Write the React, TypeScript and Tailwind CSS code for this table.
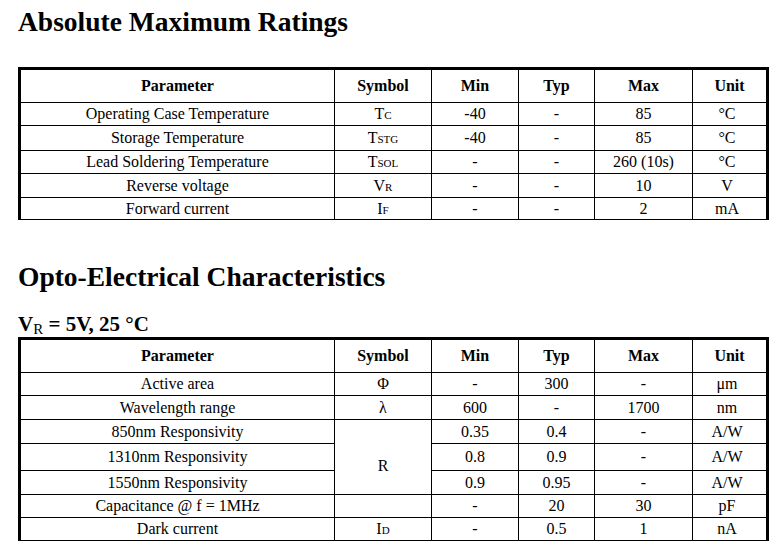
type Cell = React.ReactNode

type Row = {
  h: string
  param: string
  symbol?: Cell
  symbolSpan?: number
  noSymbol?: boolean
  min: string
  typ: string
  max: string
  unit: string
}

const Sym = ({ base, sub }: { base: string; sub: string }) => (
  <span>
    {base}
    <span className="text-[11px]">{sub}</span>
  </span>
)

const ratings: Row[] = [
  { h: 'h-[23px]', param: 'Operating Case Temperature', symbol: <Sym base="T" sub="C" />, min: '-40', typ: '-', max: '85', unit: '°C' },
  { h: 'h-[25px]', param: 'Storage Temperature', symbol: <Sym base="T" sub="STG" />, min: '-40', typ: '-', max: '85', unit: '°C' },
  { h: 'h-[23px]', param: 'Lead Soldering Temperature', symbol: <Sym base="T" sub="SOL" />, min: '-', typ: '-', max: '260 (10s)', unit: '°C' },
  { h: 'h-[24px]', param: 'Reverse voltage', symbol: <Sym base="V" sub="R" />, min: '-', typ: '-', max: '10', unit: 'V' },
  { h: 'h-[22px]', param: 'Forward current', symbol: <Sym base="I" sub="F" />, min: '-', typ: '-', max: '2', unit: 'mA' },
]

const opto: Row[] = [
  { h: 'h-[23px]', param: 'Active area', symbol: 'Φ', min: '-', typ: '300', max: '-', unit: 'μm' },
  { h: 'h-[24px]', param: 'Wavelength range', symbol: 'λ', min: '600', typ: '-', max: '1700', unit: 'nm' },
  { h: 'h-[24px]', param: '850nm Responsivity', symbol: 'R', symbolSpan: 3, min: '0.35', typ: '0.4', max: '-', unit: 'A/W' },
  { h: 'h-[27px]', param: '1310nm Responsivity', noSymbol: true, min: '0.8', typ: '0.9', max: '-', unit: 'A/W' },
  { h: 'h-[24px]', param: '1550nm Responsivity', noSymbol: true, min: '0.9', typ: '0.95', max: '-', unit: 'A/W' },
  { h: 'h-[23px]', param: 'Capacitance @ f = 1MHz', symbol: '', min: '-', typ: '20', max: '30', unit: 'pF' },
  { h: 'h-[23px]', param: 'Dark current', symbol: <Sym base="I" sub="D" />, min: '-', typ: '0.5', max: '1', unit: 'nA' },
]

const td = 'border-b border-r border-black p-0 text-center align-middle'

function SpecTable({ rows }: { rows: Row[] }) {
  return (
    <table className="w-[751px] table-fixed border-separate border-spacing-0 border-x-[3px] border-t-[3px] border-black text-[16px] leading-none">
      <thead>
        <tr className="font-bold">
          <th className={`${td} h-[33px] w-[314px]`}>Parameter</th>
          <th className={`${td} w-[97px]`}>Symbol</th>
          <th className={`${td} w-[87px]`}>Min</th>
          <th className={`${td} w-[76px]`}>Typ</th>
          <th className={`${td} w-[98px]`}>Max</th>
          <th className="border-b border-black p-0 text-center">Unit</th>
        </tr>
      </thead>
      <tbody>
        {rows.map((r) => (
          <tr key={r.param}>
            <td className={`${td} ${r.h}`}>{r.param}</td>
            {!r.noSymbol && (
              <td className={`${td} ${r.symbolSpan ? 'pt-[18px]' : ''}`} rowSpan={r.symbolSpan}>
                {r.symbol}
              </td>
            )}
            <td className={td}>{r.min}</td>
            <td className={td}>{r.typ}</td>
            <td className={td}>{r.max}</td>
            <td className="border-b border-black p-0 pr-[5px] text-center align-middle">{r.unit}</td>
          </tr>
        ))}
      </tbody>
    </table>
  )
}

export default function App() {
  return (
    <div className="min-h-screen bg-white pl-[18px] pt-[8px] text-black [font-family:'Liberation_Serif','Times_New_Roman',serif]">
      <h1 className="text-[27.5px] font-bold leading-[27px]">Absolute Maximum Ratings</h1>
      <div className="mt-[32px]">
        <SpecTable rows={ratings} />
      </div>

      <h1 className="mt-[43px] text-[27.5px] font-bold leading-[27px]">Opto-Electrical Characteristics</h1>
      <p className="mt-[24px] h-[21px] text-[21px] font-bold leading-[21px]">
        V<span className="relative top-[3px] text-[15px] font-normal">R</span> = 5V, 25 °C
      </p>
      <div className="mt-[2px]">
        <SpecTable rows={opto} />
      </div>
    </div>
  )
}
